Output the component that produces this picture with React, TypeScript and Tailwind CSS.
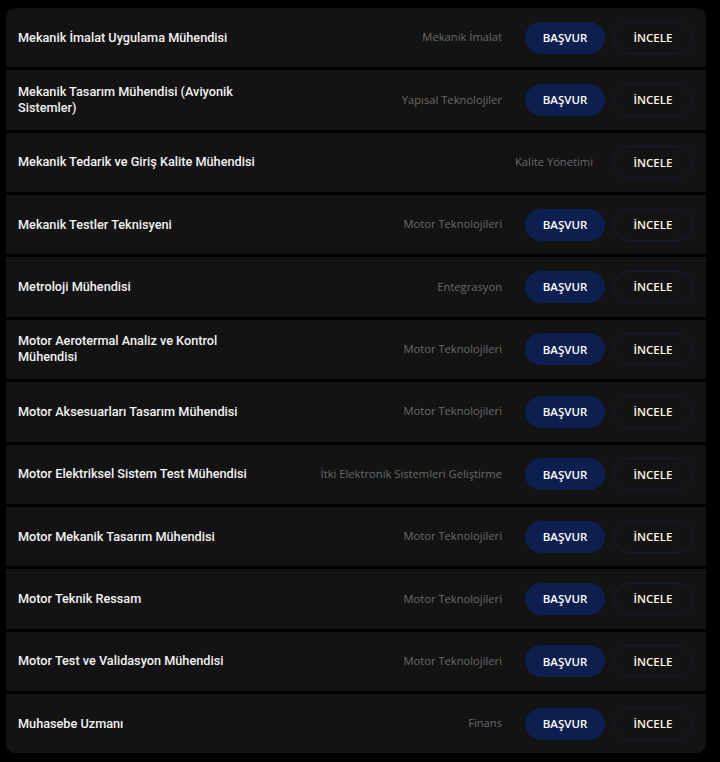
const jobs = [
  { title: 'Mekanik İmalat Uygulama Mühendisi', dept: 'Mekanik İmalat', apply: true },
  { title: 'Mekanik Tasarım Mühendisi (Aviyonik Sistemler)', dept: 'Yapısal Teknolojiler', apply: true },
  { title: 'Mekanik Tedarik ve Giriş Kalite Mühendisi', dept: 'Kalite Yönetimi', apply: false },
  { title: 'Mekanik Testler Teknisyeni', dept: 'Motor Teknolojileri', apply: true },
  { title: 'Metroloji Mühendisi', dept: 'Entegrasyon', apply: true },
  { title: 'Motor Aerotermal Analiz ve Kontrol Mühendisi', dept: 'Motor Teknolojileri', apply: true },
  { title: 'Motor Aksesuarları Tasarım Mühendisi', dept: 'Motor Teknolojileri', apply: true },
  { title: 'Motor Elektriksel Sistem Test Mühendisi', dept: 'İtki Elektronik Sistemleri Geliştirme', apply: true },
  { title: 'Motor Mekanik Tasarım Mühendisi', dept: 'Motor Teknolojileri', apply: true },
  { title: 'Motor Teknik Ressam', dept: 'Motor Teknolojileri', apply: true },
  { title: 'Motor Test ve Validasyon Mühendisi', dept: 'Motor Teknolojileri', apply: true },
  { title: 'Muhasebe Uzmanı', dept: 'Finans', apply: true },
]

export default function App() {
  return (
    <div className="min-h-[762px] w-[720px] bg-black pl-[6px] pr-[14px] pt-[8px]">
      <div className="flex flex-col gap-[3px] overflow-hidden rounded-[9px]">
        {jobs.map((job) => (
          <div key={job.title} className="flex h-[59.36px] items-center bg-[#131313] pl-[12px] pr-[13px]">
            <div className="w-[258px] text-[12.7px] font-medium leading-[16px] text-[#f2f2f2] [font-family:Roboto,sans-serif]">
              {job.title}
            </div>
            <div className="flex-1" />
            <span
              className={
                job.apply
                  ? 'mr-[23px] text-[11.2px] text-[#6a6a6a] [font-family:"Open_Sans",sans-serif]'
                  : 'mr-[20px] text-[11.2px] text-[#6a6a6a] [font-family:"Open_Sans",sans-serif]'
              }
            >
              {job.dept}
            </span>
            {job.apply && (
              <button className="mr-[8px] flex h-[32px] w-[80px] items-center justify-center rounded-full bg-[#0c1f4e] text-[11.5px] font-semibold text-white [font-family:'Open_Sans',sans-serif]">
                BAŞVUR
              </button>
            )}
            <button className="flex h-[32px] w-[80px] items-center justify-center rounded-full border border-[#111d33] bg-transparent text-[11.5px] font-semibold text-[#fbf6e2] [font-family:'Open_Sans',sans-serif]">
              İNCELE
            </button>
          </div>
        ))}
      </div>
    </div>
  )
}
